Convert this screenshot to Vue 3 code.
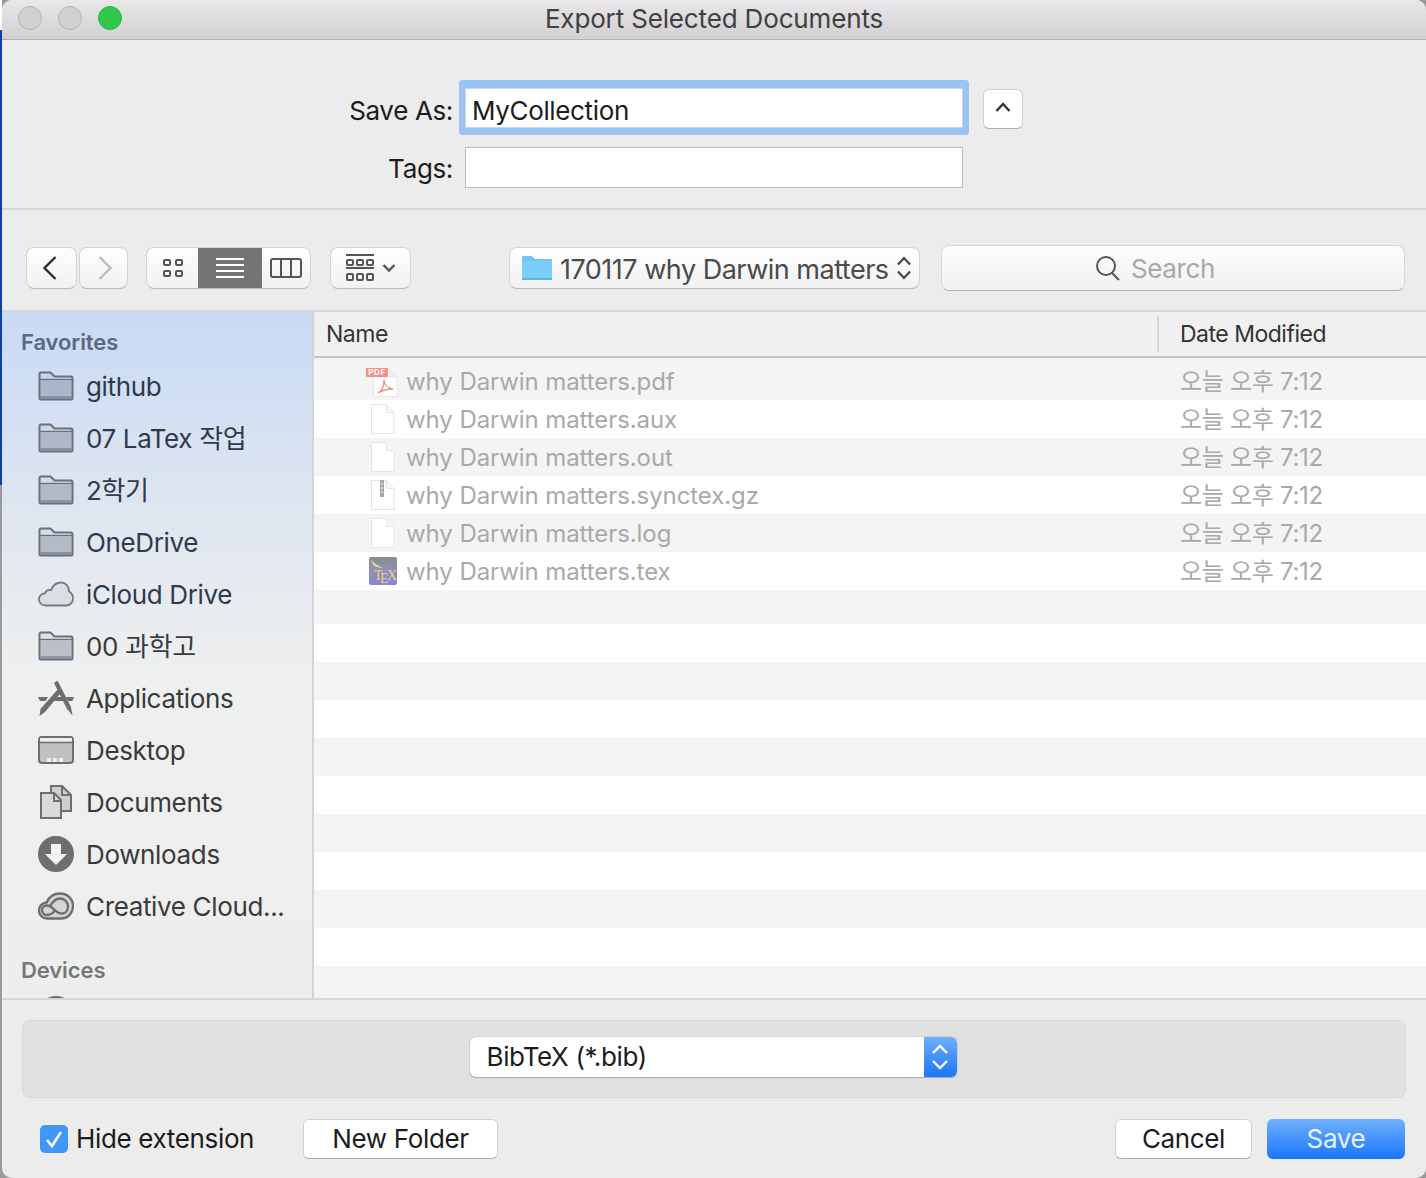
<script setup>
// macOS export sheet with a file browser
const favorites = [
  { label: 'github', icon: 'folder', top: true },
  { label: '07 LaTex 작업', icon: 'folder', top: true },
  { label: '2학기', icon: 'folder', top: true },
  { label: 'OneDrive', icon: 'folder', top: true },
  { label: 'iCloud Drive', icon: 'cloud', top: true },
  { label: '00 과학고', icon: 'folder' },
  { label: 'Applications', icon: 'apps' },
  { label: 'Desktop', icon: 'desktop' },
  { label: 'Documents', icon: 'docs' },
  { label: 'Downloads', icon: 'download' },
  { label: 'Creative Cloud...', icon: 'creative' },
]

const files = [
  { name: 'why Darwin matters.pdf', icon: 'pdf' },
  { name: 'why Darwin matters.aux', icon: 'blank' },
  { name: 'why Darwin matters.out', icon: 'blank' },
  { name: 'why Darwin matters.synctex.gz', icon: 'zip' },
  { name: 'why Darwin matters.log', icon: 'blank' },
  { name: 'why Darwin matters.tex', icon: 'tex' },
]

const emptyRows = 11
</script>

<template>
  <div class="screen">
    <div class="desktop-edge"></div>
    <div class="window">
      <header class="titlebar">
        <div class="lights">
          <span class="light"></span>
          <span class="light"></span>
          <span class="light green"></span>
        </div>
        <div class="title">Export Selected Documents</div>
      </header>

      <section class="form">
        <label class="form-label save-label">Save As:</label>
        <div class="field focused">MyCollection</div>
        <button class="expand">
          <svg width="18" height="12" viewBox="0 0 18 12"><path d="M2.500 10 9 3l6.500 7" fill="none" stroke="#333" stroke-width="2.400"/></svg>
        </button>
        <label class="form-label tags-label">Tags:</label>
        <div class="field"></div>
      </section>

      <section class="toolbar">
        <div class="nav-group">
          <button class="tool nav-btn back">
            <svg width="16" height="26" viewBox="0 0 16 26"><path d="M13.500 2 2.500 13l11 11" fill="none" stroke="#2c2c2c" stroke-width="2.400"/></svg>
          </button>
          <button class="tool nav-btn forward">
            <svg width="16" height="26" viewBox="0 0 16 26"><path d="M2.500 2l11 11-11 11" fill="none" stroke="#bcbcbc" stroke-width="2.400"/></svg>
          </button>
        </div>

        <div class="view-group">
          <button class="view-btn icons">
            <svg width="22" height="20" viewBox="0 0 22 20" fill="none" stroke="#555" stroke-width="2">
              <rect x="2" y="2" width="6" height="5" rx="1"/><rect x="14" y="2" width="6" height="5" rx="1"/>
              <rect x="2" y="13" width="6" height="5" rx="1"/><rect x="14" y="13" width="6" height="5" rx="1"/>
            </svg>
          </button>
          <button class="view-btn list">
            <svg width="28" height="20" viewBox="0 0 28 20" stroke="#fff" stroke-width="2"><path d="M0 1h28M0 7h28M0 13h28M0 19h28"/></svg>
          </button>
          <button class="view-btn columns">
            <svg width="32" height="20" viewBox="0 0 32 20" fill="none" stroke="#555" stroke-width="2">
              <rect x="1" y="1" width="30" height="18" rx="2"/><path d="M11 1v18M21 1v18"/>
            </svg>
          </button>
        </div>

        <button class="tool arrange">
          <svg width="28" height="28" viewBox="0 0 28 28" fill="none" stroke="#555" stroke-width="2">
            <path d="M0 1h28M0 14h28"/>
            <rect x="1" y="6" width="6" height="5" rx="1"/><rect x="11" y="6" width="6" height="5" rx="1"/><rect x="21" y="6" width="6" height="5" rx="1"/>
            <rect x="1" y="20" width="6" height="6" rx="1"/><rect x="11" y="20" width="6" height="6" rx="1"/><rect x="21" y="20" width="6" height="6" rx="1"/>
          </svg>
          <svg width="14" height="10" viewBox="0 0 14 10"><path d="M1.500 2 7 7.500 12.500 2" fill="none" stroke="#555" stroke-width="2.400"/></svg>
        </button>

        <button class="tool path-popup">
          <svg width="32" height="26" viewBox="0 0 32 26">
            <path d="M1 25V2q0-1 1-1h9l3 3h16q1 0 1 1v20z" fill="#6ec6f6"/>
            <path d="M1 6h30v18q0 1-1 1H2q-1 0-1-1z" fill="#7bcdfa"/>
            <path d="M1 23h30v1q0 1-1 1H2q-1 0-1-1z" fill="#5fb4e6"/>
          </svg>
          <span class="path-text">170117 why Darwin matters</span>
          <svg width="16" height="26" viewBox="0 0 16 26" fill="none" stroke="#444" stroke-width="2.200"><path d="M2 9.500 8 3l6 6.500M2 16.500 8 23l6-6.500"/></svg>
        </button>

        <div class="search">
          <svg width="26" height="26" viewBox="0 0 26 26" fill="none" stroke="#555" stroke-width="2"><circle cx="11" cy="11" r="9"/><path d="m17 18 7 7"/></svg>
          <span class="search-text">Search</span>
        </div>
      </section>

      <main class="browser">
        <aside class="sidebar">
          <div class="group-title fav-title">Favorites</div>
          <div v-for="item in favorites" :key="item.label" class="side-item" :class="{ top: item.top }">
            <span class="side-icon">
              <svg v-if="item.icon === 'folder'" width="36" height="30" viewBox="0 0 36 30">
                <path d="M1.500 27V3q0-1.500 1.500-1.500h9.500l4 4H33q1.500 0 1.500 1.500v20q0 1.500-1.500 1.500H3Q1.500 28.500 1.500 27z" fill="#6b7486" fill-opacity=".08" stroke="#6b6f78" stroke-width="2"/>
                <rect x="2.500" y="9.500" width="31" height="18" fill="#6b7486" fill-opacity=".32"/>
                <rect x="2.500" y="25" width="31" height="2.500" fill="#5c6270" fill-opacity=".45"/>
                <path d="M2 8.500h32" stroke="#6b6f78" stroke-width="1.400"/>
              </svg>
              <svg v-else-if="item.icon === 'cloud'" width="36" height="26" viewBox="0 0 36 26">
                <path d="M8 24.500C3.500 24.500 1 21.500 1 18.500 1 15 3.500 12.500 7 12.300 8 9.500 10.500 8.500 13 9 15 4 19 1.500 23 1.500c5 0 8 4 8 9 3 1.500 4 4 4 7 0 4-3 7-7 7z" fill="#6b7486" fill-opacity=".1" stroke="#767a80" stroke-width="1.800"/>
              </svg>
              <svg v-else-if="item.icon === 'apps'" width="36" height="36" viewBox="0 0 36 36" fill="#6e6e6e">
                <path d="m16 3 3.500-2.500L33 27l1.500 8.500L29 29z"/>
                <path d="m20 9 2.500 4.500L7 32l-5.500 4L2.500 29z"/>
                <path d="M0 17h10l-2.500 4H2zM13.500 17h11l2 4H11zM28 17h8l-1.500 4H30z"/>
              </svg>
              <svg v-else-if="item.icon === 'desktop'" width="36" height="28" viewBox="0 0 36 28">
                <rect x="1" y="1" width="34" height="26" rx="3" fill="#c0c0c0" stroke="#6e6e6e" stroke-width="2"/>
                <rect x="2" y="2" width="32" height="4" fill="#efefef"/>
                <path d="M1 6.500h34" stroke="#6e6e6e" stroke-width="1.500"/>
                <path d="M9 22h4v4H9zM15 22h4v4h-4zM21 22h4v4h-4z" fill="#efefef"/>
              </svg>
              <svg v-else-if="item.icon === 'docs'" width="32" height="34" viewBox="0 0 32 34" stroke="#6e6e6e" stroke-width="2">
                <path d="M11 24V1h11l9 9v16H20" fill="#cfcfcf"/>
                <path d="M1 8h13l7 7v18H1z" fill="#dadada"/>
                <path d="M14 8v8h7M22 1v9h9" fill="none"/>
              </svg>
              <svg v-else-if="item.icon === 'download'" width="36" height="36" viewBox="0 0 36 36">
                <circle cx="18" cy="18" r="18" fill="#6e6e6e"/>
                <path d="M13 8h10v10h6L18 29 7 18h6z" fill="#f2f2f2"/>
              </svg>
              <svg v-else width="36" height="28" viewBox="0 0 36 28" fill="none" stroke="#6e6e6e" stroke-width="2.400">
                <path d="M9 26.500C4 26.500 1 22.500 1 18.500 1 14 4.500 10.500 8.500 10.500 11 5 16 1.500 22 1.500 29.500 1.500 35 7 35 14c0 7-5 12.500-12 12.500z" fill="#d4d4d4"/>
                <path d="M9 23c-3 0-5-2.500-5-5 0-3 2.500-4.500 5-4.500 6 0 8 8 15 8 3.500 0 6-3 6-7 0-4.500-3.500-8-8-8-5 0-8 4-10.500 8.500"/>
                <path d="M9 23c4 0 7-3 8.500-5.500"/>
              </svg>
            </span>
            <span class="side-label">{{ item.label }}</span>
          </div>
          <div class="group-title dev-title">Devices</div>
          <div class="side-item">
            <span class="side-icon">
              <svg width="36" height="36" viewBox="0 0 36 36"><circle cx="18" cy="18" r="18" fill="#6e6e6e"/></svg>
            </span>
          </div>
        </aside>

        <div class="table">
          <div class="table-head">
            <div class="col-name">Name</div>
            <div class="col-date">Date Modified</div>
          </div>
          <div class="rows">
            <div v-for="file in files" :key="file.name" class="row">
              <span class="file-icon" :class="file.icon">
                <svg v-if="file.icon === 'pdf'" width="34" height="30" viewBox="0 0 34 30">
                  <path d="M7.500 1.500h16l7.500 7.500v19.500H7.500z" fill="#fff" stroke="#e6e6e6"/>
                  <path d="M23.500 1.500V9H31" fill="#f0f0f0" stroke="#e6e6e6"/>
                  <rect x="0" y="0" width="22" height="9" fill="#f58f8a"/>
                  <text x="11" y="7" text-anchor="middle" class="pdf-label">PDF</text>
                  <path d="M12 25c4-2 6-7 6-13 0 4 3 8 9 9-5 0-10 1-15 4z" fill="none" stroke="#f08f8a" stroke-width="1.400"/>
                </svg>
                <svg v-else-if="file.icon === 'tex'" width="34" height="34" viewBox="0 0 34 34">
                  <defs>
                    <linearGradient id="texFill" x1="0" y1="0" x2="0" y2="1">
                      <stop offset="0" stop-color="#8a8e84"/>
                      <stop offset=".45" stop-color="#8f8fb8"/>
                      <stop offset="1" stop-color="#8f83d6"/>
                    </linearGradient>
                  </defs>
                  <rect x="3" y="3" width="28" height="28" rx="2" fill="url(#texFill)"/>
                  <path d="M5 6c4 4 8 6 12 8-5 0-8-2-10-3z" fill="#d8e0a8"/>
                  <text x="8" y="26" class="tex-label">T</text>
                  <text x="14" y="29" class="tex-label">E</text>
                  <text x="21" y="26" class="tex-label">X</text>
                </svg>
                <svg v-else width="34" height="34" viewBox="0 0 34 34">
                  <path d="M5.500 2.500h15l7.500 8v21H5.500z" fill="#fff" stroke="#e4e4e4"/>
                  <path d="M20.500 2.500v8H28" fill="#f7f7f7" stroke="#e4e4e4"/>
                  <template v-if="file.icon === 'zip'">
                    <rect x="14" y="2" width="4" height="17" fill="#a6a6a6"/>
                    <path d="M15 6h2M15 10h2M15 14h2" stroke="#e2e2e2" stroke-width="1.500"/>
                  </template>
                </svg>
              </span>
              <span class="file-name">{{ file.name }}</span>
              <span class="file-date">오늘 오후 7:12</span>
            </div>
            <div v-for="n in emptyRows" :key="n" class="row empty"></div>
          </div>
        </div>
      </main>

      <footer class="footer">
        <div class="accessory">
          <div class="format-popup">
            <span class="format-text">BibTeX (*.bib)</span>
            <span class="format-arrows">
              <svg width="18" height="30" viewBox="0 0 18 30" fill="none" stroke="#fff" stroke-width="2.400"><path d="M2 11 9 4l7 7M2 19l7 7 7-7"/></svg>
            </span>
          </div>
        </div>
        <div class="actions">
          <span class="checkbox">
            <svg width="20" height="20" viewBox="0 0 20 20"><path d="M3 11l5 6L17 3" fill="none" stroke="#fff" stroke-width="2.600"/></svg>
          </span>
          <span class="check-label">Hide extension</span>
          <button class="btn new-folder">New Folder</button>
          <button class="btn cancel">Cancel</button>
          <button class="btn save">Save</button>
        </div>
      </footer>
    </div>
  </div>
</template>

<style scoped>
.screen {
  width: 1426px;
  height: 1178px;
  display: flex;
  overflow: hidden;
  background: #9a9a9a;
  font-family: Inter, "Noto Sans CJK KR", sans-serif;
  font-size: 26px;
  line-height: 32px;
  letter-spacing: -0.35px;
  color: #1c1c1c;
}

button {
  font: inherit;
  letter-spacing: inherit;
  color: inherit;
  padding: 0;
  margin: 0;
}

.desktop-edge {
  width: 2px;
  flex: none;
  background: linear-gradient(#ffffff 0, #ffffff 30px, #0d3fa6 30px, #0d3fa6 485px, #9a9a9a 485px);
}

.window {
  flex: 1;
  display: flex;
  flex-direction: column;
  background: #ececec;
  border-radius: 10px;
  overflow: hidden;
  min-width: 0;
}

.titlebar {
  height: 40px;
  flex: none;
  box-sizing: border-box;
  display: grid;
  grid-template-columns: 1fr auto 1fr;
  align-items: center;
  padding: 0 16px 3px;
  background: linear-gradient(#e9e7e9, #d1cfd1);
  border-bottom: 1px solid #b1afb1;
}

.lights {
  display: flex;
  gap: 16px;
}

.light {
  width: 24px;
  height: 24px;
  box-sizing: border-box;
  border-radius: 50%;
  background: #d0d0d0;
  border: 1px solid #b4b4b4;
}

.light.green {
  background: #2fc84a;
  border-color: #2bb843;
}

.title {
  color: #404040;
  letter-spacing: -0.15px;
  padding-top: 1px;
}

.form {
  height: 170px;
  flex: none;
  box-sizing: border-box;
  border-bottom: 2px solid #d6d6d6;
  display: grid;
  grid-template-columns: 451px 498px 40px;
  grid-template-rows: 40px 41px;
  column-gap: 12px;
  row-gap: 19px;
  padding-top: 48px;
  align-items: center;
}

.form-label {
  text-align: right;
  grid-column: 1;
}

.save-label {
  padding-top: 6px;
}

.tags-label {
  padding-top: 2px;
}

.field {
  height: 100%;
  box-sizing: border-box;
  background: #fff;
  border: 1px solid #bdbdbd;
  padding: 6px 6px 0;
  grid-column: 2;
}

.field.focused {
  border-color: #c4d6ea;
  box-shadow: 0 -2px 0 6px #99c3f1, 0 1px 0 6px #99c3f1;
  border-radius: 1px;
}

.expand {
  width: 40px;
  height: 40px;
  margin-top: 2px;
  margin-left: 8px;
  background: #fff;
  border: 1px solid #d0d0d0;
  border-bottom-color: #b0b0b0;
  border-radius: 6px;
  display: flex;
  align-items: center;
  justify-content: center;
  padding-bottom: 4px;
}

.toolbar {
  height: 102px;
  flex: none;
  box-sizing: border-box;
  border-bottom: 2px solid #d6d6d6;
  display: flex;
  align-items: center;
  padding-left: 24px;
  padding-top: 16px;
}

.tool {
  height: 42px;
  box-sizing: border-box;
  background: linear-gradient(#fefefe, #f1f1f1);
  border: 1px solid #d4d4d4;
  border-bottom-color: #b8b8b8;
  border-radius: 8px;
  display: flex;
  align-items: center;
  justify-content: center;
}

.nav-group {
  display: flex;
  gap: 2px;
}

.nav-btn.back {
  width: 51px;
  padding-right: 4px;
}

.nav-btn.forward {
  width: 49px;
  padding-left: 3px;
}

.view-group {
  display: flex;
  height: 42px;
  margin-left: 18px;
  box-sizing: border-box;
  border: 1px solid #d4d4d4;
  border-bottom-color: #b8b8b8;
  border-radius: 8px;
  overflow: hidden;
  background: linear-gradient(#fefefe, #f1f1f1);
}

.view-btn {
  border: 0;
  background: none;
  display: flex;
  align-items: center;
  justify-content: center;
}

.view-btn.icons {
  width: 51px;
}

.view-btn.list {
  width: 64px;
  background: #747474;
}

.view-btn.columns {
  width: 48px;
}

.arrange {
  width: 81px;
  margin-left: 19px;
  gap: 8px;
}

.path-popup {
  width: 411px;
  margin-left: 98px;
  justify-content: flex-start;
  padding-left: 11px;
  gap: 7px;
  color: #4a4a4a;
  font-size: 27px;
  letter-spacing: -0.5px;
}

.path-text {
  white-space: nowrap;
  width: 329px;
  text-align: left;
  padding-top: 4px;
}

.search {
  width: 464px;
  height: 46px;
  margin-left: 21px;
  box-sizing: border-box;
  background: linear-gradient(#fdfdfd, #f1f1f1);
  border: 1px solid #d8d8d8;
  border-bottom-color: #b2b2b2;
  border-radius: 8px;
  display: flex;
  align-items: center;
  justify-content: center;
  gap: 10px;
  padding-right: 36px;
  color: #a8a8a8;
}

.search-text {
  padding-top: 2px;
}

.browser {
  flex: 1;
  display: flex;
  min-height: 0;
}

.sidebar {
  width: 312px;
  flex: none;
  box-sizing: border-box;
  border-right: 2px solid #d4d4d4;
  background: linear-gradient(#c9daf5 0, #dfe6f0 200px, #eeefef 360px, #eeeeee 100%);
  overflow: hidden;
  padding-left: 19px;
}

.group-title {
  font-size: 22px;
  font-weight: 600;
  line-height: 28px;
  letter-spacing: -0.1px;
}

.fav-title {
  margin-top: 16px;
  margin-bottom: 4px;
  color: #5b6880;
}

.dev-title {
  margin-top: 24px;
  margin-bottom: 4px;
  color: #777;
}

.side-item {
  height: 52px;
  display: flex;
  align-items: center;
  color: #3a3a3a;
  white-space: nowrap;
}

.side-item.top {
  color: #2f3a4c;
}

.side-icon {
  width: 36px;
  margin-left: 17px;
  margin-right: 12px;
  display: flex;
  justify-content: center;
  flex: none;
}

.side-label {
  padding-top: 1px;
}

.table {
  flex: 1;
  min-width: 0;
  display: flex;
  flex-direction: column;
  background: #fff;
}

.table-head {
  height: 46px;
  flex: none;
  box-sizing: border-box;
  display: flex;
  align-items: center;
  background: #f0f0f0;
  border-bottom: 2px solid #c4c4c4;
  font-size: 23px;
  letter-spacing: -0.5px;
  color: #333;
}

.col-name {
  width: 845px;
  box-sizing: border-box;
  padding-left: 12px;
  height: 36px;
  line-height: 36px;
  border-right: 2px solid #d8d8d8;
}

.col-date {
  padding-left: 21px;
}

.rows {
  flex: 1;
  min-height: 0;
  overflow: hidden;
}

.row {
  height: 38px;
  display: flex;
  align-items: center;
  color: #a9a9a9;
  font-size: 24px;
  letter-spacing: -0.08px;
}

.row:nth-child(odd) {
  background: #f4f4f4;
}

.row:first-child {
  height: 42px;
  padding-top: 4px;
  box-sizing: border-box;
}

.row:nth-child(7) {
  height: 34px;
}

.file-icon {
  width: 34px;
  margin-left: 52px;
  margin-right: 6px;
  display: flex;
  flex: none;
}

.file-icon.pdf {
  padding-top: 4px;
}

.file-name {
  width: 774px;
  flex: none;
  white-space: nowrap;
  padding-top: 2px;
}

.file-date {
  white-space: nowrap;
  padding-top: 2px;
  letter-spacing: -0.3px;
}

.pdf-label {
  font-size: 8px;
  font-weight: 700;
  letter-spacing: 0.6px;
  fill: #fff;
}

.tex-label {
  font-family: "Liberation Serif", serif;
  font-size: 14px;
  letter-spacing: 0;
  fill: #e8d873;
}

.footer {
  height: 180px;
  flex: none;
  box-sizing: border-box;
  border-top: 2px solid #d6d6d6;
  padding: 20px 20px 0;
}

.accessory {
  height: 78px;
  box-sizing: border-box;
  background: #e1e1e1;
  border: 1px solid #dadada;
  border-radius: 8px;
  display: flex;
  align-items: center;
  justify-content: center;
  padding-bottom: 4px;
  padding-right: 2px;
}

.format-popup {
  width: 487px;
  height: 40px;
  box-sizing: border-box;
  display: flex;
  background: #fff;
  border-radius: 6px;
  box-shadow: 0 1px 1px #a8a8a8, 0 0 0 1px #d4d4d4;
  overflow: hidden;
}

.format-text {
  flex: 1;
  padding-left: 17px;
  line-height: 40px;
}

.format-arrows {
  width: 33px;
  background: linear-gradient(#6fb0fb, #1a76fb);
  display: flex;
  align-items: center;
  justify-content: center;
}

.actions {
  display: flex;
  align-items: center;
  margin-top: 21px;
  padding-left: 18px;
  padding-right: 1px;
}

.checkbox {
  width: 28px;
  height: 28px;
  border-radius: 5px;
  background: #3f97fa;
  display: flex;
  align-items: center;
  justify-content: center;
}

.check-label {
  margin-left: 8px;
  width: 227px;
  white-space: nowrap;
}

.btn {
  height: 40px;
  box-sizing: border-box;
  background: #fff;
  border: 1px solid #d2d2d2;
  border-bottom-color: #aaaaaa;
  border-radius: 6px;
}

.new-folder {
  width: 195px;
}

.cancel {
  width: 137px;
  margin-left: auto;
}

.save {
  width: 138px;
  margin-left: 15px;
  border: 0;
  color: #eaf3ff;
  background: linear-gradient(#6fb0fb, #1a76fb);
}
</style>
